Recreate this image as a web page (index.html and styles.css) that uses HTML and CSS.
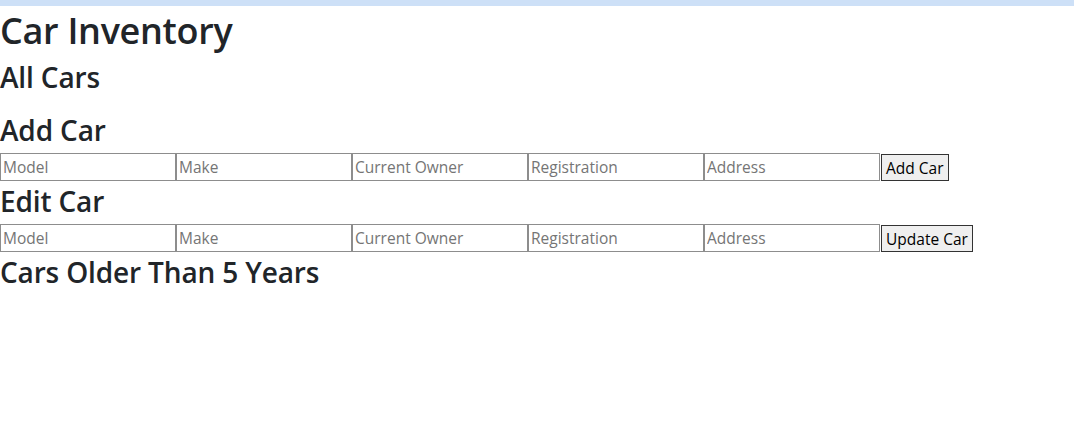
FILE: index.html
```html
<!DOCTYPE html>
<html lang="en">
<head>
<meta charset="utf-8">
<title>Car Inventory</title>
<link rel="stylesheet" href="styles.css">
</head>
<body>
<div class="topbar"></div>
<main class="app">
  <h1 class="title">Car Inventory</h1>
  <section class="all-cars">
    <h2 class="heading">All Cars</h2>
    <ul class="car-list"></ul>
  </section>
  <section>
    <h2 class="heading">Add Car</h2>
    <form class="car-form">
      <input class="field" type="text" placeholder="Model"><input class="field" type="text" placeholder="Make"><input class="field" type="text" placeholder="Current Owner"><input class="field" type="text" placeholder="Registration"><input class="field" type="text" placeholder="Address"><button class="btn" type="button">Add Car</button>
    </form>
  </section>
  <section>
    <h2 class="heading">Edit Car</h2>
    <form class="car-form">
      <input class="field" type="text" placeholder="Model"><input class="field" type="text" placeholder="Make"><input class="field" type="text" placeholder="Current Owner"><input class="field" type="text" placeholder="Registration"><input class="field" type="text" placeholder="Address"><button class="btn" type="button">Update Car</button>
    </form>
  </section>
  <section>
    <h2 class="heading">Cars Older Than 5 Years</h2>
  </section>
</main>
</body>
</html>
```

FILE: styles.css
```css
* { box-sizing: border-box; }
html, body { margin: 0; padding: 0; background: #fff; }
body {
  font-family: "Open Sans", "Noto Sans", sans-serif;
  color: #212529;
  font-size: 16px;
  line-height: 24px;
}
.topbar { height: 6px; background: #cde0f7; }
.title {
  margin: 0 0 3px;
  padding-top: 2px;
  font-size: 36px;
  line-height: 46px;
  font-weight: 600;
  letter-spacing: -0.3px;
}
.heading {
  margin: 0 0 4px;
  padding-top: 2px;
  font-size: 28px;
  line-height: 37px;
  font-weight: 600;
  letter-spacing: -0.15px;
}
.car-list { margin: 0 0 14px; padding: 0; list-style: none; }
.car-form { display: flex; align-items: flex-start; margin: 0; }
.field {
  width: 176px;
  height: 28px;
  margin: 0;
  padding: 1px 2px;
  border: 1px solid #8d8d8d;
  font-family: "Open Sans", "Noto Sans", sans-serif;
  font-size: 15.5px;
  line-height: 24px;
  color: #212529;
  background: #fff;
  border-radius: 0;
  outline: none;
}
.field::placeholder { color: #757575; opacity: 1; }
.btn {
  margin: 1px 0 0 1px;
  height: 27px;
  padding: 0 4px;
  border: 1px solid #333;
  background: #efefef;
  color: #000;
  font-family: "Open Sans", "Noto Sans", sans-serif;
  font-size: 15.5px;
  line-height: 24px;
  border-radius: 0;
}
```
